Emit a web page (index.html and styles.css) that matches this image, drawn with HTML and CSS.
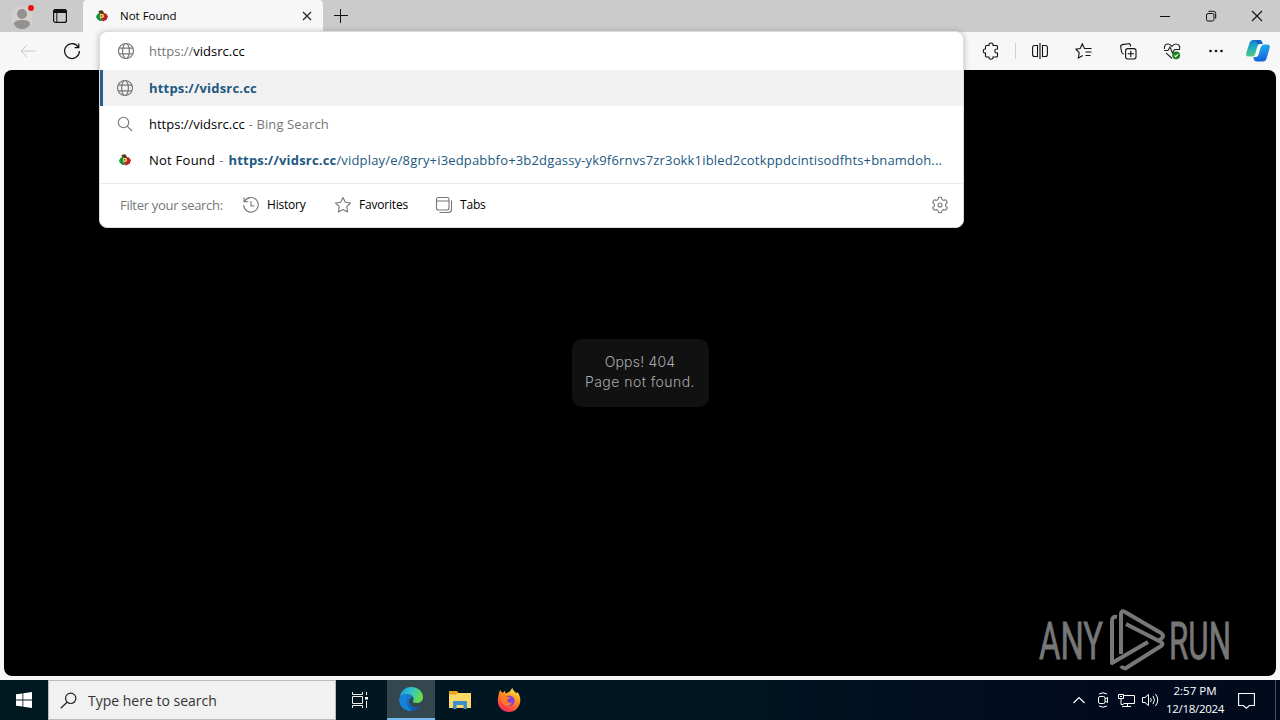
FILE: index.html
```html
<!DOCTYPE html>
<html lang="en">
  <head>
    <meta charset="UTF-8" />
    <meta name="viewport" content="width=device-width, initial-scale=1.0" />
    <title>Not Found</title>
    <link rel="stylesheet" href="styles.css">
  </head>
  <body>
    <svg class="defs" width="0" height="0">
      <defs>
        <symbol id="globe" viewBox="0 0 18 18">
          <g fill="none" stroke="currentColor" stroke-width="1.2">
            <circle cx="9" cy="9" r="7.5" />
            <ellipse cx="9" cy="9" rx="3.4" ry="7.5" />
            <path d="M2.2 6.2h13.6M2.2 11.8h13.6" />
          </g>
        </symbol>
        <symbol id="favicon" viewBox="0 0 12 12">
          <path d="M2.500 1.500Q5-.5 7 1l1.500 3H5L3.500 5z" fill="#5a3a1c" />
          <path d="M1.500 4 3.600 3 5 5.500 4.500 8l2.300 2.800-3.400.2L.8 8.700 0 6.500z" fill="#139447" />
          <path d="M7 3.200 10 3.500l2 2.700-1.300 3.600-3.700 1.700L4.600 8.500 8 7z" fill="#b32625" />
          <path d="M3.900 3.200 8.500 5.900 4.200 8.500z" fill="#f2c72c" />
          <path d="M5.200 4.900 6.800 5.900 5.200 6.700z" fill="#3d3325" />
        </symbol>
        <linearGradient id="edge-a" x1="0" y1="0" x2="1" y2="0.3">
          <stop offset="0" stop-color="#2093dc" />
          <stop offset=".5" stop-color="#2cc3d2" />
          <stop offset="1" stop-color="#69dc4c" />
        </linearGradient>
        <linearGradient id="edge-b" x1="0" y1="0" x2=".7" y2="1">
          <stop offset="0" stop-color="#1a8cdb" />
          <stop offset="1" stop-color="#0e56a8" />
        </linearGradient>
        <linearGradient id="fox" x1=".8" y1="0" x2=".3" y2="1">
          <stop offset="0" stop-color="#fff04a" />
          <stop offset=".45" stop-color="#ff8a1e" />
          <stop offset="1" stop-color="#f5225b" />
        </linearGradient>
        <linearGradient id="cop-a" x1="0" y1="0" x2=".2" y2="1">
          <stop offset="0" stop-color="#1475c8" />
          <stop offset=".45" stop-color="#1ca8c8" />
          <stop offset="1" stop-color="#4fcb83" />
        </linearGradient>
        <linearGradient id="cop-b" x1="0" y1="0" x2=".2" y2="1">
          <stop offset="0" stop-color="#22b9ee" />
          <stop offset="1" stop-color="#1663dc" />
        </linearGradient>
      </defs>
    </svg>

    <header class="tabbar">
      <div class="tabbar-left">
        <div class="avatar">
          <svg width="22" height="27" viewBox="0 0 22 27">
            <circle cx="11" cy="14.500" r="11" fill="#d3d0ce" />
            <circle cx="11" cy="11" r="5" fill="#949190" />
            <path d="M3 21c0-3 3-4 8-4s8 1 8 4c-1 3-4 5-8 5s-7-2-8-5z" fill="#949190" />
          </svg>
          <i class="alert-dot"></i>
        </div>
        <svg class="workspaces" width="16" height="16" viewBox="0 0 16 16">
          <rect x="1.600" y="1.600" width="12.800" height="12.800" rx="2" fill="none" stroke="#111" stroke-width="1.200" />
          <path d="M1.500 4.500v-1q0-2 2-2h9q2 0 2 2v1z" fill="#111" stroke="#111" />
          <path d="M4.800 5v9" stroke="#111" />
        </svg>
      </div>
      <div class="tab">
        <svg width="12" height="12"><use href="#favicon" /></svg>
        <span class="tab-title">Not Found</span>
        <svg class="tab-close" width="10" height="10" viewBox="0 0 10 10"><path d="M1 1l8 8M9 1l-8 8" stroke="#222" stroke-width="1.200" /></svg>
      </div>
      <svg class="new-tab" width="14" height="14" viewBox="0 0 14 14"><path d="M0 6.500h14M6.500 0v14" stroke="#111" /></svg>
      <div class="window-buttons">
        <svg width="12" height="12" viewBox="0 0 12 12"><path d="M1 6.500h10" stroke="#111" /></svg>
        <svg width="12" height="12" viewBox="0 0 12 12" fill="none" stroke="#111">
          <rect x="1.500" y="3.500" width="7.500" height="7.500" rx="1.500" />
          <path d="M3.500 1.300h5q2.200 0 2.200 2.200v5" />
        </svg>
        <svg width="12" height="12" viewBox="0 0 12 12"><path d="M1 1l10 10M11 1L1 11" stroke="#111" stroke-width="1.100" /></svg>
      </div>
    </header>

    <nav class="toolbar">
      <svg class="back" width="16" height="14" viewBox="0 0 16 14" fill="none" stroke="#c8c8c8"><path d="M15.500 7H1M7 1L1 7l6 6" /></svg>
      <svg class="reload" width="18" height="18" viewBox="0 0 18 18" fill="none" stroke="#111" stroke-width="1.200">
        <path d="M15.300 5.200A7.400 7.400 0 1 0 16.400 9M15.800 1.500v4.200h-4.200" />
      </svg>
      <div class="tools">
        <svg width="18" height="18" viewBox="0 0 18 18" fill="none" stroke="#111" stroke-width="1.100">
          <path d="M4.500 3.500H7C6.800 1.800 7.600 1 9 1s2.200.8 2 2.500h3.500q1 0 1 1V7c-1.700-.2-2.700.6-2.700 2s1 2.300 2.700 2v3q0 1-1 1H11c.2 1.500-.6 2.200-2 2.200S6.800 16.500 7 15H4.500q-1 0-1-1v-3C2 11.200 1.300 10.400 1.300 9S2 6.900 3.500 7V4.500q0-1 1-1z" />
        </svg>
        <i class="divider"></i>
        <svg width="18" height="18" viewBox="0 0 18 18" fill="none" stroke="#111" stroke-width="1.100">
          <path d="M6.500 3.500h-3q-1.900 0-1.900 2v7q0 2 2 2h2.900zM11.500 3.500h3q1.900 0 1.900 2v7q0 2-2 2h-2.900zM9 1v16" />
        </svg>
        <svg width="18" height="18" viewBox="0 0 18 18" fill="none" stroke="#111" stroke-width="1.100">
          <path d="M10.500 6.500H9.500L7.300 1.800 5.200 6.500 1 7.200l3.200 3.500-.8 5.200 4.400-2.300M9.500 6.500h7M10.500 10h6M10.500 13.500h5" />
        </svg>
        <svg width="18" height="18" viewBox="0 0 18 18" fill="none" stroke="#111" stroke-width="1.100">
          <path d="M11.500 4.500V3q-.5-1.500-2-1.300l-6 .9Q1.400 3 1.700 5l.9 5q.4 2 2.400 2" />
          <rect x="6.600" y="6.600" width="10.400" height="10.400" rx="2.200" />
          <path d="M11.800 8.700v6.200M8.700 11.800h6.200" />
        </svg>
        <svg width="18" height="18" viewBox="0 0 18 18" fill="none" stroke="#222" stroke-width="1.100">
          <path d="M1.500 7C.8 3.500 3 2 5 2q2.300 0 4 2.300Q10.700 2 13 2c2.500 0 4.400 2 3.600 5M1 8.500h4l2-3.500 2.500 6 2-3.500h5.500M3 10.800 9 16.500" />
          <circle cx="13.200" cy="13.300" r="3.900" fill="#16821b" stroke="none" />
          <path d="M11.500 13.500l1.200 1.200 2.500-2.700" stroke="#fff" />
        </svg>
        <svg width="18" height="18" viewBox="0 0 18 18" fill="#111">
          <circle cx="3.500" cy="9" r="1.300" /><circle cx="9" cy="9" r="1.300" /><circle cx="14.500" cy="9" r="1.300" />
        </svg>
        <svg class="copilot" width="24" height="24" viewBox="0 0 24 24">
          <path d="M7 1h6.500Q15.500 1 16 3l.7 2h-3Q12 5 11.200 8l-2 7Q8.600 17.500 6 17.500H3Q-.5 17.500.3 14L3.500 4Q4.500 1 7 1z" fill="url(#cop-a)" />
          <path d="M17 22.500h-6.500q-2 0-2.500-2L7.300 18h3q1.700 0 2.500-3l2-7Q15.500 5.500 18 5.500h3q3.500 0 2.700 3.500l-3 10q-1 3.500-3.700 3.500z" fill="url(#cop-b)" />
          <path d="M7 1h6.500Q15.500 1 16 3l.7 2h-5L9 1.500z" fill="#1762bd" />
        </svg>
      </div>
    </nav>

    <main class="page">
      <div class="error">
        <span>Opps! 404</span>
        <span>Page not found.</span>
      </div>
      <svg class="watermark" width="200" height="68" viewBox="0 0 200 68">
        <g class="brand">
          <text x="3" y="52" textLength="64" lengthAdjust="spacingAndGlyphs">ANY</text>
          <text x="133" y="52" textLength="62" lengthAdjust="spacingAndGlyphs">RUN</text>
        </g>
        <g fill="none" stroke="#777" stroke-width="4" stroke-linejoin="round">
          <path d="M81 10q-5-1-5 4v42l36-21" />
          <path d="M85 47V7q0-4 4-2l36 21q4 3 0 6l-4 2" />
          <path d="M90 17l35 18q3 2 0 4L90 61q-3 1-5-2" />
        </g>
      </svg>
    </main>

    <section class="omnibox">
      <div class="row address">
        <svg class="row-icon" width="18" height="18"><use href="#globe" /></svg>
        <span class="url"><span class="muted">https://</span>vidsrc.cc</span>
      </div>
      <div class="row selected">
        <svg class="row-icon" width="18" height="18"><use href="#globe" /></svg>
        <b class="link">https://vidsrc.cc</b>
      </div>
      <div class="row">
        <svg class="row-icon" width="18" height="18" viewBox="0 0 18 18" fill="none" stroke="#777" stroke-width="1.100">
          <circle cx="7.500" cy="7.500" r="5.200" /><path d="M11.300 11.300l4.700 4.700" />
        </svg>
        <span class="url">https://vidsrc.cc</span><span class="muted hint">- Bing Search</span>
      </div>
      <div class="row">
        <svg class="row-icon small" width="12" height="12"><use href="#favicon" /></svg>
        <span class="page-title">Not Found</span><span class="muted dash">-</span><b class="link">https://vidsrc.cc</b><span class="link path">/vidplay/e/8gry+i3edpabbfo+3b2dgassy-yk9f6rnvs7zr3okk1ibled2cotkppdcintisodfhts+bnamdoh...</span>
      </div>
      <div class="filters">
        <span class="muted filter-label">Filter your search:</span>
        <div class="filter history">
          <svg width="18" height="18" viewBox="0 0 18 18" fill="none" stroke="#777" stroke-width="1.100">
            <path d="M2.500 5.500A7.300 7.300 0 1 1 1.700 9M2 1.500v4.300h4.300M9 5v5h3.500" />
          </svg>
          <span>History</span>
        </div>
        <div class="filter favorites">
          <svg width="18" height="18" viewBox="0 0 18 18" fill="none" stroke="#777" stroke-width="1.100" stroke-linejoin="round">
            <path d="M9 1.500l2.300 4.800 5.200.7-3.800 3.600.9 5.300L9 13.400l-4.600 2.500.9-5.300L1.500 7l5.200-.7z" />
          </svg>
          <span>Favorites</span>
        </div>
        <div class="filter tabs">
          <svg width="18" height="18" viewBox="0 0 18 18" fill="none" stroke="#777" stroke-width="1.100">
            <rect x="1.500" y="1.500" width="12.500" height="12.500" rx="2" />
            <path d="M1.500 5H14M16.500 4.500v9q0 3-3 3H4.500" />
          </svg>
          <span>Tabs</span>
        </div>
        <svg class="gear" width="18" height="18" viewBox="0 0 18 18" fill="none" stroke="#777" stroke-width="1.100" stroke-linejoin="round">
          <path d="M7.500 1.300h3l.6 2.300 1.300.8 2.300-.7 1.600 2.700-1.700 1.700v1.800l1.700 1.700-1.600 2.700-2.300-.7-1.300.8-.6 2.300h-3l-.6-2.300-1.300-.8-2.300.7-1.600-2.700 1.700-1.700V8.100L1.700 6.400l1.600-2.700 2.300.7 1.300-.8z" />
          <circle cx="9" cy="9" r="2" />
        </svg>
      </div>
    </section>

    <footer class="taskbar">
      <div class="start">
        <svg width="16" height="16" viewBox="0 0 16 16" fill="#fff">
          <path d="M0 2.300 6.500 1.400V7.500H0zM7.300 1.300 16 0v7.500H7.300zM0 8.400h6.500v6.200L0 13.700zM7.300 8.400H16V16l-8.700-1.300z" />
        </svg>
      </div>
      <div class="search">
        <svg width="17" height="17" viewBox="0 0 17 17" fill="none" stroke="#222" stroke-width="1.200">
          <circle cx="10.700" cy="6.300" r="5.200" /><path d="M7 10.200.8 16.300" />
        </svg>
        <span>Type here to search</span>
      </div>
      <div class="task">
        <svg width="18" height="18" viewBox="0 0 18 18" fill="none" stroke="#eee">
          <path d="M1.500 1v2.500h10V1M1.500 17v-2.500h10V17M1.500 5.500h10v7h-10zM15.500 1v3M15.500 10v7" />
          <path d="M14 6h3v2.500h-3z" fill="#fff" stroke="none" />
        </svg>
      </div>
      <div class="task active">
        <svg width="24" height="24" viewBox="0 0 24 24">
          <path d="M1 10C1.500 4.500 6 0 12 0c7 0 12 4.800 12 10 0 4-3 6-6.500 6-2.800 0-4-1-3.500-2 1.600-2.500 0-6-4-6.500C6 7 2.500 8 1 10z" fill="url(#edge-a)" />
          <path d="M.2 13C0 9 3.500 7 7.800 7c3.700 0 6.300 2 6.500 4-2-1-4.300.5-4.300 3 0 4 4 6.500 8 6 2-.2 3-1 4-1.500C20 22 16.500 24 12 24 5.500 24 .5 19.500.2 13z" fill="url(#edge-b)" />
          <path d="M7.800 9.500C6 14 7.500 20 13 23.900 5.500 24.300.5 19 .2 13c1-3 4.800-4.500 7.600-3.500z" fill="#1583d8" />
        </svg>
      </div>
      <div class="task">
        <svg width="22" height="18" viewBox="0 0 22 18">
          <path d="M0 0h8l1.500 2H22v5H0z" fill="#e5a51f" />
          <path d="M0 3.500h7L9 2h13v15H0z" fill="#fbd867" />
          <path d="M4 18v-7q0-1 1-1h12q1 0 1 1v7h-3.500v-4h-7v4z" fill="#3b8ec8" />
        </svg>
      </div>
      <div class="task">
        <svg width="24" height="24" viewBox="0 0 24 24">
          <path d="M2 5l1-3 2.500 3L8 2.800l.5 2.700L12 4c1.500-1 1.800-2.500 3.500-4 .8 3.500 3 3.500 4 5.500l1-1.500c3 4 3.500 8.500 2 12.500C20.800 21 17 24 12 24 6 24 .8 19.500.8 13 .8 9.500 1.500 7.500 2 5z" fill="url(#fox)" />
          <circle cx="12.300" cy="12.700" r="5.300" fill="#8542d8" />
          <path d="M4 8c2-1 4-.5 5.500.5l3.700.8c-.5 1.800-3 1.700-3 2.800 0 3 3 3.500 5 2.200-1 3.700-6 4.700-8.500 1.800C4.800 14 4 11 4 8z" fill="#ff7c22" />
        </svg>
      </div>
      <div class="tray">
        <svg class="chevron" width="12" height="8" viewBox="0 0 12 8" fill="none" stroke="#fff" stroke-width="1.200"><path d="M.5 7 6 1.500 11.500 7" /></svg>
        <svg class="meet" width="12" height="16" viewBox="0 0 12 16" fill="none" stroke="#fff">
          <rect x="1.500" y="4.500" width="6.500" height="7" rx="1.500" />
          <path d="M8 7l2.500-1.500v5L8 9M2 2q4-2.500 8 0M2 14q4 2.500 8 0" />
        </svg>
        <svg class="network" width="17" height="15" viewBox="0 0 17 15" fill="none" stroke="#fff">
          <path d="M6 2.500h10.500v8h-11M4 13.500h9M9.500 10.500v3M.5 1.500h5v4h-5zM3 5.500v6h2.500M2 3.500h2" />
        </svg>
        <svg class="volume" width="17" height="14" viewBox="0 0 17 14" fill="none" stroke="#fff">
          <path d="M.5 4.500H3l3.500-3v11L3 9.500H.5zM8.500 5q1.500 2 0 4M11 3q3 4 0 8M13.500 1q4.500 6 0 12" />
        </svg>
        <div class="clock">
          <span class="time">2:57 PM</span>
          <span class="date">12/18/2024</span>
        </div>
        <svg class="notify" width="17" height="17" viewBox="0 0 17 17" fill="none" stroke="#fff" stroke-width="1.100"><path d="M.6 1.500h15.800v12h-5l-3 2.700-3-2.700H.6z" /></svg>
        <i class="show-desktop"></i>
      </div>
    </footer>
  </body>
</html>
```
FILE: styles.css
```css
* {
  box-sizing: border-box;
}
body {
  position: relative;
  display: flex;
  flex-direction: column;
  width: 1280px;
  height: 720px;
  margin: 0;
  overflow: hidden;
  background: #f7f7f7;
  color: #000;
  font-family: 'Open Sans', 'Noto Sans', sans-serif;
  font-size: 13px;
  white-space: nowrap;
}
svg {
  display: block;
  flex-shrink: 0;
}
.defs {
  position: absolute;
}

/* tab strip */
.tabbar {
  display: flex;
  align-items: center;
  height: 32px;
  background: #cbcbcb;
}
.tabbar-left {
  display: flex;
  align-items: center;
  width: 83px;
  height: 32px;
  padding-left: 11px;
  gap: 19px;
}
.avatar {
  position: relative;
}
.alert-dot {
  position: absolute;
  top: 2px;
  right: -1px;
  width: 6px;
  height: 6px;
  border-radius: 50%;
  background: #e8111c;
}
.tab {
  display: flex;
  align-items: center;
  width: 240px;
  height: 32px;
  padding: 0 11px 0 13px;
  border-radius: 4px 4px 0 0;
  background: #f7f7f7;
}
.tab-title {
  margin: -2px 0 0 12px;
  font-size: 11.5px;
}
.tab-close {
  margin-left: auto;
}
.new-tab {
  margin-left: 11px;
}
.window-buttons {
  display: flex;
  gap: 34px;
  margin-left: auto;
  padding-right: 17px;
}

/* toolbar */
.toolbar {
  display: flex;
  align-items: center;
  height: 38px;
  padding: 0 10px 0 20px;
}
.reload {
  margin-left: 27px;
}
.tools {
  display: flex;
  align-items: center;
  gap: 26px;
  margin-left: auto;
}
.divider {
  width: 1px;
  height: 16px;
  margin: 0 -11px;
  background: #d0d0d0;
}
.copilot {
  margin-left: -5px;
}

/* page */
.page {
  position: relative;
  display: flex;
  align-items: center;
  justify-content: center;
  height: 606px;
  margin: 0 4px;
  border-radius: 8px;
  background: #000;
}
.error {
  display: flex;
  flex-direction: column;
  align-items: center;
  width: 137px;
  height: 68px;
  padding-top: 13px;
  border-radius: 10px;
  background: #111;
  color: #aaa;
  font-family: 'Inter', sans-serif;
  font-size: 14px;
  font-weight: 300;
  line-height: 20px;
  letter-spacing: 0.45px;
}
.error span:first-child {
  letter-spacing: 0.2px;
}
.watermark {
  position: absolute;
  right: 40px;
  bottom: 1px;
}
.brand {
  fill: #777;
  stroke: #777;
  stroke-width: 0.8px;
  font-family: 'Roboto', sans-serif;
  font-size: 51px;
}

/* address bar with suggestions */
.omnibox {
  position: absolute;
  top: 31px;
  left: 99px;
  width: 865px;
  height: 197px;
  border: 1px solid #ddd;
  border-radius: 8px;
  background: #fff;
  box-shadow: 0 1px 6px rgba(0, 0, 0, 0.25);
}
.row {
  display: flex;
  align-items: center;
  height: 36px;
  padding-left: 16px;
}
.row.address {
  height: 38px;
  padding-left: 17px;
}
.row.selected {
  padding-left: 13px;
  border-left: 3px solid #245f8d;
  background: #f1f1f1;
}
.row-icon {
  margin-right: 15px;
  color: #777;
}
.row-icon.small {
  margin: 0 18px 0 3px;
}
.row.address .row-icon {
  margin-right: 14px;
}
.muted {
  color: #767676;
}
.link {
  color: #20587f;
}
b.link {
  letter-spacing: 0.19px;
}
.path {
  letter-spacing: 0.17px;
}
.page-title {
  letter-spacing: 0.25px;
}
.hint {
  margin-left: 4px;
  letter-spacing: 0.1px;
}
.dash {
  margin: 0 5px 0 4px;
}

.filters {
  display: flex;
  align-items: center;
  height: 43px;
  margin-top: 5px;
  padding: 0 14px 0 20px;
  border-top: 1px solid #ebebeb;
}
.filter {
  display: flex;
  align-items: center;
  gap: 7px;
  font-size: 12px;
  letter-spacing: -0.2px;
}
.filter span {
  margin-top: -1px;
}
.filter-label {
  width: 122px;
  letter-spacing: -0.3px;
}
.history {
  width: 92px;
}
.favorites {
  width: 101px;
}
.gear {
  margin-left: auto;
}

/* taskbar */
.taskbar {
  display: flex;
  height: 40px;
  margin-top: 4px;
  background: linear-gradient(90deg, #001820, #001522 55%, #020b1e 85%);
}
.start {
  display: flex;
  align-items: center;
  justify-content: center;
  width: 48px;
}
.search {
  display: flex;
  align-items: center;
  gap: 11px;
  width: 288px;
  padding-left: 11px;
  border: 1px solid #bbb;
  background: #f1f1f1;
  color: #333;
  font-size: 14px;
}
.task {
  display: flex;
  align-items: center;
  justify-content: center;
  width: 48px;
  margin-right: 1px;
}
.task.active {
  border-bottom: 2px solid #76b9ed;
  background: #34474f;
}
.task:nth-child(3) {
  width: 50px;
  padding-right: 2px;
}
.tray {
  display: flex;
  align-items: center;
  margin-left: auto;
  color: #fff;
}
.meet {
  margin-left: 12px;
}
.network {
  margin-left: 9px;
}
.volume {
  margin-left: 7px;
}
.clock {
  display: flex;
  flex-direction: column;
  align-items: center;
  width: 60px;
  margin-left: 6px;
  font-size: 11.5px;
  line-height: 18px;
}
.date {
  letter-spacing: -0.3px;
}
.notify {
  margin-left: 13px;
}
.show-desktop {
  width: 5px;
  height: 40px;
  margin-left: 20px;
  border-left: 1px solid #45505c;
}
```
